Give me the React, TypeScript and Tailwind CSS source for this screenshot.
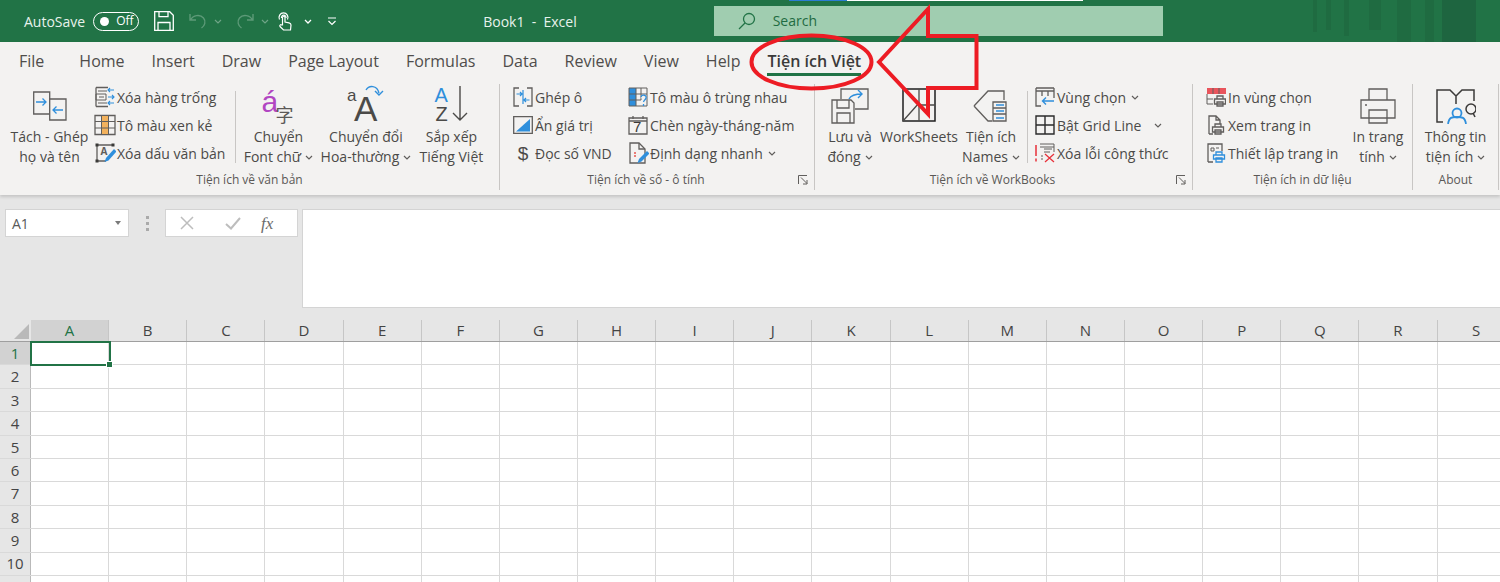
import type { ReactNode } from "react";

const columns = ["A", "B", "C", "D", "E", "F", "G", "H", "I", "J", "K", "L", "M", "N", "O", "P", "Q", "R", "S"];
const rows = [1, 2, 3, 4, 5, 6, 7, 8, 9, 10, 11];
const tabs = ["Home", "Insert", "Draw", "Page Layout", "Formulas", "Data", "Review", "View", "Help"];

const G = "#605e5c";
const B = "#2f8fdc";

function Chevron({ className = "" }: { className?: string }) {
  return (
    <svg viewBox="0 0 8 5" className={`inline-block w-2 h-[5px] ${className}`} fill="none" stroke="#605e5c" strokeWidth="1.2">
      <path d="M1 1l3 3 3-3" />
    </svg>
  );
}

function Icon({ size, w, h, children }: { size?: number; w?: number; h?: number; children: ReactNode }) {
  const width = w ?? size ?? 22;
  const height = h ?? size ?? 22;
  return (
    <svg width={width} height={height} viewBox={`0 0 ${width} ${height}`} fill="none" strokeWidth="1.3" className="shrink-0">
      {children}
    </svg>
  );
}

function SmallRow({ icon, label, chevron, gap }: { icon: ReactNode; label: string; chevron?: boolean; gap?: string }) {
  return (
    <div className="flex items-center h-[28px] whitespace-nowrap">
      <div className="w-[24px] flex justify-center">{icon}</div>
      <span>{label}</span>
      {chevron && <Chevron className={gap ?? "ml-[5px]"} />}
    </div>
  );
}

function LargeButton({ width, icon, line1, line2, chevron }: { width: string; icon: ReactNode; line1: string; line2: string; chevron?: boolean }) {
  return (
    <div className={`${width} shrink-0 flex flex-col items-center`}>
      <div className="h-[40px] mt-[2px] flex items-center justify-center">{icon}</div>
      <div className="h-[20px] mt-[1px] leading-[20px] whitespace-nowrap">{line1}</div>
      <div className="h-[20px] leading-[20px] whitespace-nowrap flex items-center">
        {line2}
        {chevron && <Chevron className="ml-[4px]" />}
      </div>
    </div>
  );
}

function Group({ width, label, launcher, children }: { width: string; label: string; launcher?: boolean; children: ReactNode }) {
  return (
    <div className={`${width} shrink-0 flex flex-col border-r border-[#c8c6c4]`}>
      <div className="h-[85px] flex">{children}</div>
      <div className="h-[21px] flex items-center text-[12px] text-[#5a5856]">
        <div className="flex-1 text-center">{label}</div>
        {launcher ? (
          <svg width="22" height="12" viewBox="0 0 22 12" fill="none" stroke="#605e5c">
            <path d="M6.5 10V1.5H15M9 3.5l6 6M15 6v4h-4" />
          </svg>
        ) : null}
      </div>
    </div>
  );
}

function MiniSep({ className }: { className: string }) {
  return <div className={`w-px h-[72px] mt-[7px] bg-[#c8c6c4] shrink-0 ${className}`} />;
}

export default function App() {
  return (
    <div className="relative w-[1500px] h-[582px] overflow-hidden bg-white text-[14px] text-[#4b4a48] font-['Open_Sans','Noto_Sans',sans-serif]">
      {/* title bar */}
      <div className="relative h-[42px] bg-[#217346] flex items-center text-white">
        <span className="ml-[24px] text-[14px] text-[#e8f2ec]">AutoSave</span>
        <div className="ml-[8px] w-[46px] h-[19px] border border-white rounded-full flex items-center">
          <span className="ml-[6px] w-[9px] h-[9px] rounded-full bg-white" />
          <span className="ml-[7px] text-[12px] leading-none">Off</span>
        </div>
        <svg className="ml-[15px]" width="20" height="20" viewBox="0 0 20 20" fill="none" stroke="#fff" strokeWidth="1.3">
          <path d="M.7.7h15l3.6 3.6v15H.7zM5 .7v5h9v-5M4 19v-7.5h12V19" />
        </svg>
        <svg className="ml-[15px]" width="18" height="18" viewBox="0 0 18 18" fill="none" stroke="#5d9a78" strokeWidth="1.4">
          <path d="M1 2v6h6M1.5 8C4 3 11 2 14.500 6c3 3.500 1 8-2 10" />
        </svg>
        <div className="ml-[7px] opacity-50">
          <svg width="8" height="5" viewBox="0 0 8 5" fill="none" stroke="#bcd6c7" strokeWidth="1.2"><path d="M1 1l3 3 3-3" /></svg>
        </div>
        <svg className="ml-[14px]" width="18" height="18" viewBox="0 0 18 18" fill="none" stroke="#5d9a78" strokeWidth="1.4">
          <path d="M17 2v6h-6M16.500 8C14 3 7 2 3.500 6c-3 3.500-1 8 2 10" />
        </svg>
        <div className="ml-[7px] opacity-50">
          <svg width="8" height="5" viewBox="0 0 8 5" fill="none" stroke="#bcd6c7" strokeWidth="1.2"><path d="M1 1l3 3 3-3" /></svg>
        </div>
        <svg className="ml-[8px]" width="16" height="20" viewBox="0 0 16 20" fill="none" stroke="#fff" strokeWidth="1.2">
          <path d="M2.500 8.500a4.500 4.500 0 1 1 8 0M4.500 7a2.300 2.300 0 1 1 4.500 0" />
          <path d="M5.500 14V6.500a1.200 1.200 0 0 1 2.500 0V11l4 .8c1.500.4 2 1 2 2.200l-.5 5H6.500L3 15.500c-.8-1 .6-2.300 1.500-1.500z" fill="#217346" />
        </svg>
        <svg className="ml-[11px]" width="8" height="5" viewBox="0 0 8 5" fill="none" stroke="#fff" strokeWidth="1.3"><path d="M1 1l3 3 3-3" /></svg>
        <svg className="ml-[15px]" width="10" height="9" viewBox="0 0 10 9" fill="none" stroke="#fff" strokeWidth="1.2"><path d="M1 1h8M1.500 4l3.500 3.500L8.500 4" /></svg>
        <span className="ml-[146px] text-[14px] whitespace-pre text-[#e8f2ec]">Book1  -  Excel</span>
        <div className="ml-[137px] w-[449px] h-[30px] mt-[-1px] bg-[#a0cdb0] flex items-center">
          <svg className="ml-[24px]" width="18" height="18" viewBox="0 0 18 18" fill="none" stroke="#217346" strokeWidth="1.3">
            <circle cx="11" cy="7" r="5.500" />
            <path d="M7 11l-6 6" />
          </svg>
          <span className="ml-[17px] text-[14px] text-[#1f6b42]">Search</span>
        </div>
        {/* top edge of window behind and the background pattern */}
        <div className="absolute top-0 left-[789px] w-[58px] h-px bg-[#2b7cd3]" />
        <div className="absolute top-0 left-[847px] w-[236px] h-px bg-white" />
        <div className="absolute top-0 right-0 h-[42px] w-[187px] flex">
          <div className="w-[4px] h-[32px] ml-0 bg-[#1f6b41]" />
          <div className="w-[5px] h-[30px] ml-[9px] bg-[#1f6b41]" />
          <div className="w-[5px] h-[36px] ml-[13px] bg-[#1f6b41]" />
          <div className="w-[12px] h-[30px] ml-[20px] bg-[#1f6b41]" />
          <div className="w-[14px] h-[42px] ml-[16px] bg-[#1f6b41]" />
          <div className="w-[9px] h-[42px] ml-[14px] bg-[#1f6b41]" />
          <div className="w-[34px] h-[42px] ml-[8px] bg-[#1e6540]" />
        </div>
      </div>

      {/* ribbon */}
      <div className="h-[153px] bg-[#f3f2f1] shadow-[0_2px_3px_rgba(0,0,0,0.15)] relative">
        <div className="h-[42px] flex items-start pt-[8px] text-[16px] text-[#4f4d4b] leading-[22px]">
          <span className="ml-[19px]">File</span>
          <div className="ml-[35px] flex gap-[27px]">
            {tabs.map((tab) => (
              <span key={tab}>{tab}</span>
            ))}
            <div className="relative font-semibold text-[#3b3a39]">
              Tiện ích Việt
              <div className="absolute left-0 right-0 top-[23px] h-[3px] bg-[#217346]" />
            </div>
          </div>
        </div>

        <div className="flex">
          <Group width="w-[500px]" label="Tiện ích về văn bản">
            <LargeButton
              width="w-[79px] ml-[10px]"
              line1="Tách - Ghép"
              line2="họ và tên"
              icon={
                <Icon w={34} h={30}>
                  <path d="M.7 1h16v22H.7z" stroke={G} />
                  <path d="M16.700 8H33v21H16.700z" stroke={G} fill="#f3f2f1" />
                  <path d="M3 11h10M9.500 7.500L13 11l-3.500 3.500M30 19H20M23.500 15.500L20 19l3.500 3.500" stroke={B} />
                </Icon>
              }
            />
            <div className="ml-[4px] flex flex-col -mt-[1px]">
              <SmallRow
                label="Xóa hàng trống"
                icon={
                  <Icon size={22}>
                    <path d="M2 1.500h12M2 20.500h12M2 1.500v19" stroke={G} />
                    <path d="M2 8h10v6H2zM5 11h5M4 5h9M4 17h9" stroke={G} strokeWidth="1" />
                    <path d="M20 4h-6M16 2l-2 2 2 2M14 11h6M18 9l2 2-2 2M20 17h-6M16 15l-2 2 2 2" stroke={B} strokeWidth="1.1" />
                  </Icon>
                }
              />
              <SmallRow
                label="Tô màu xen kẻ"
                icon={
                  <Icon size={22}>
                    <path d="M1 1.500h20v19H1z" stroke={G} />
                    <path d="M8 2h7v18H8z" fill="#f3b25d" />
                    <path d="M1 7.500h20M1 14h20M7.500 2v18M14.500 2v18" stroke={G} strokeWidth="1" />
                  </Icon>
                }
              />
              <SmallRow
                label="Xóa dấu văn bản"
                icon={
                  <Icon size={22}>
                    <path d="M3 3h16M3 3v16M3 19h9" stroke={G} />
                    <path d="M1.500 1.500h3v3h-3zM17.500 1.500h3v3h-3zM1.500 17.500h3v3h-3z" fill="#3b3a39" />
                    <text x="6.500" y="13" fontSize="10" fontWeight="700" fill={G} fontFamily="Open Sans">A</text>
                    <path d="M20 7l-8 9-1.500 4 4-1.500 8-9z" fill={B} />
                  </Icon>
                }
              />
            </div>
            <MiniSep className="ml-[10px]" />
            <LargeButton
              width="w-[70px] ml-[7px]"
              line1="Chuyển"
              line2="Font chữ"
              chevron
              icon={
                <div className="relative w-[34px] h-[36px] font-['Liberation_Sans','Noto_Sans_CJK_SC',sans-serif]">
                  <span className="absolute left-0 top-[-3px] text-[30px] leading-[34px] text-[#b146c2]">á</span>
                  <span className="absolute left-[14px] top-[16px] text-[18px] leading-[20px] text-[#5b5957] font-['Noto_Sans_CJK_SC',sans-serif]">字</span>
                </div>
              }
            />
            <LargeButton
              width="w-[91px] ml-[7px]"
              line1="Chuyển đổi"
              line2="Hoa-thường"
              chevron
              icon={
                <div className="relative w-[38px] h-[38px] font-['Liberation_Sans',sans-serif] text-[#4b4a48]">
                  <span className="absolute left-0 top-[0px] text-[17px] leading-[18px]">a</span>
                  <span className="absolute left-[7px] top-[4px] text-[35px] leading-[36px]">A</span>
                  <svg className="absolute left-[18px] top-[-2px]" width="20" height="18" viewBox="0 0 20 18" fill="none" stroke={B} strokeWidth="1.4">
                    <path d="M1 5c3-5 11-5 13 3M10 6l4 4 4-4" />
                  </svg>
                </div>
              }
            />
            <LargeButton
              width="w-[66px] ml-[7px]"
              line1="Sắp xếp"
              line2="Tiếng Việt"
              icon={
                <div className="relative w-[34px] h-[38px] font-['Liberation_Sans',sans-serif]">
                  <span className="absolute left-0 top-[-2px] text-[20px] leading-[20px] text-[#2f8fdc]">A</span>
                  <span className="absolute left-[1px] top-[17px] text-[20px] leading-[20px] text-[#4b4a48]">Z</span>
                  <svg className="absolute left-[18px] top-[-1px]" width="16" height="36" viewBox="0 0 16 36" fill="none" stroke="#4b4a48" strokeWidth="1.4">
                    <path d="M8 0v34M1 27l7 7 7-7" />
                  </svg>
                </div>
              }
            />
          </Group>

          <Group width="w-[315px]" label="Tiện ích về số - ô tính" launcher>
            <div className="ml-[11px] flex flex-col -mt-[1px] w-[115px]">
              <SmallRow
                label="Ghép ô"
                icon={
                  <Icon size={20}>
                    <path d="M6 1H1v18h5M14 1h5v18h-5" stroke={G} />
                    <path d="M3.500 7H9M7 5l2 2-2 2M16.500 13H11M13 11l-2 2 2 2M10 3v14" stroke={B} strokeWidth="1.200" />
                  </Icon>
                }
              />
              <SmallRow
                label="Ẩn giá trị"
                icon={
                  <Icon w={20} h={18}>
                    <path d="M.7.700h18.600v16.600H.7z" stroke={G} />
                    <path d="M3 15.500L17 3v12.500z" fill={B} />
                  </Icon>
                }
              />
              <SmallRow
                label="Đọc số VND"
                icon={<span className="text-[19px] leading-none text-[#4b4a48] font-['Liberation_Sans',sans-serif]">$</span>}
              />
            </div>
            <div className="flex flex-col -mt-[1px]">
              <SmallRow
                label="Tô màu ô trùng nhau"
                icon={
                  <Icon size={20}>
                    <path d="M1 1h7v18H1z" fill={B} />
                    <path d="M1 1h18v18H1zM1 7h18M1 13h12M8 1v18M13 1v12" stroke={G} strokeWidth="1" />
                    <path d="M13 10c1-3 6-2 5 1-.5 2-2 2-2.500 4M15.500 17v2" stroke={B} strokeWidth="1.300" fill="#f3f2f1" />
                  </Icon>
                }
              />
              <SmallRow
                label="Chèn ngày-tháng-năm"
                icon={
                  <div className="relative">
                    <Icon size={20}>
                      <path d="M1 3h18v16H1zM1 6h18M5 1v3M15 1v3" stroke={G} />
                    </Icon>
                    <span className="absolute left-[5px] top-[3px] text-[15px] leading-[18px] text-[#3b3a39] font-['Liberation_Sans',sans-serif]">7</span>
                  </div>
                }
              />
              <SmallRow
                label="Định dạng nhanh"
                chevron
                icon={
                  <Icon size={22}>
                    <path d="M3 1h9l6 6v14H3z" stroke={G} />
                    <path d="M12 1v6h6" stroke={G} />
                    <path d="M7 11h2M7 14h2" stroke="#e8554e" strokeWidth="1.500" />
                    <path d="M20 9l-8 8-1.500 4 4-1.500 8-8z" fill={B} />
                  </Icon>
                }
              />
            </div>
          </Group>

          <Group width="w-[378px]" label="Tiện ích về WorkBooks" launcher>
            <LargeButton
              width="w-[52px] ml-[9px]"
              line1="Lưu và"
              line2="đóng"
              chevron
              icon={
                <Icon w={38} h={38}>
                  <path d="M10 12V2h27v20H24" stroke={G} />
                  <path d="M18 12c2-4 6-5 13-5M27 3l4 4-4 4" stroke={B} strokeWidth="1.400" />
                  <path d="M1 13h19l3 3v20H1zM6 13v8h12v-8M6 36v-10h13v10" stroke={G} fill="#f3f2f1" />
                </Icon>
              }
            />
            <LargeButton
              width="w-[76px] ml-[5px]"
              line1="WorkSheets"
              line2=""
              icon={
                <Icon w={34} h={36}>
                  <path d="M1 1h32v32H1z" stroke="#1f1f1f" strokeWidth="1.500" />
                  <path d="M1 33L17 15M17 1v32M17 17h16" stroke="#4b4a48" />
                </Icon>
              }
            />
            <LargeButton
              width="w-[52px] ml-[8px]"
              line1="Tiện ích"
              line2="Names"
              chevron
              icon={
                <Icon w={36} h={36}>
                  <path d="M1 18L15 3h16v9M19 33h-4L1 18" stroke={G} />
                  <path d="M20 14h13v19H20zM20 20h13M20 26h13" stroke={G} />
                  <path d="M23 17h8M23 23h8M23 30h8" stroke={B} strokeWidth="1.500" />
                </Icon>
              }
            />
            <MiniSep className="ml-[10px]" />
            <div className="ml-[5px] flex flex-col -mt-[1px]">
              <SmallRow
                label="Vùng chọn"
                chevron
                icon={
                  <Icon size={20}>
                    <path d="M1 1h18M1 4h18M1 1v18h5M19 1v10M7 4v5M13 4v5" stroke={G} />
                    <path d="M19 14H8M11 10.500L7.500 14l3.500 3.500" stroke={B} strokeWidth="1.400" />
                  </Icon>
                }
              />
              <SmallRow
                label="Bật Grid Line"
                chevron
                gap="ml-[13px]"
                icon={
                  <Icon size={20}>
                    <path d="M1 1h18v18H1zM10 1v18M1 10h18" stroke="#2b2b2b" strokeWidth="1.400" />
                  </Icon>
                }
              />
              <SmallRow
                label="Xóa lỗi công thức"
                icon={
                  <Icon size={20}>
                    <path d="M5 1h14M5 4h14M19 1v8M9 6h8M9 9h6M6 13h2M6 16h2" stroke={G} strokeWidth="1" />
                    <path d="M1 2v11M1 15.500v3" stroke="#e8303a" strokeWidth="1.500" />
                    <path d="M10 11l9 8M19 11l-9 8" stroke="#e8303a" strokeWidth="1.300" />
                  </Icon>
                }
              />
            </div>
          </Group>

          <Group width="w-[220px]" label="Tiện ích in dữ liệu">
            <div className="ml-[11px] flex flex-col -mt-[1px] w-[145px]">
              <SmallRow
                label="In vùng chọn"
                icon={
                  <Icon size={20}>
                    <path d="M1 1h19v6H1z" fill="#e9555c" />
                    <path d="M7 1v6M13 1v6M1 7v10h6M1 12h6" stroke={G} strokeWidth="1" />
                    <path d="M11 9h6v3h-6zM8.500 12h11v5h-11zM11 15h6v4h-6z" stroke={G} fill="#f3f2f1" />
                  </Icon>
                }
              />
              <SmallRow
                label="Xem trang in"
                icon={
                  <Icon size={20}>
                    <path d="M3 19V1h7l4 4v4M10 1v4h4M3 19h4" stroke={G} />
                    <path d="M9 9h6v3H9zM6.500 12h11v5h-11zM9 15h6v4H9z" stroke={G} fill="#f3f2f1" />
                  </Icon>
                }
              />
              <SmallRow
                label="Thiết lập trang in"
                icon={
                  <Icon size={20}>
                    <path d="M2 19V1h14v7M2 19h5" stroke={G} />
                    <path d="M5 5h3v3H5zM10 5h3" stroke={G} strokeWidth="1" />
                    <path d="M10 9h6v3h-6zM7.500 12h11v4h-11zM10 15h6v4h-6z" stroke={B} fill="#f3f2f1" />
                  </Icon>
                }
              />
            </div>
            <LargeButton
              width="w-[58px]"
              line1="In trang"
              line2="tính"
              chevron
              icon={
                <Icon w={36} h={36}>
                  <path d="M9 12V1h18v11M1 12h34v18H1zM9 22h18v13H9z" stroke={G} fill="#f3f2f1" />
                  <circle cx="6" cy="17" r="1" fill={G} />
                </Icon>
              }
            />
          </Group>

          <Group width="w-[86px]" label="About">
            <LargeButton
              width="w-[85px]"
              line1="Thông tin"
              line2="tiện ích"
              chevron
              icon={
                <Icon w={40} h={36}>
                  <path d="M7 34H1V2h13l6 6v8M20 8l6-6h12v11" stroke="#3b3a39" strokeWidth="1.500" />
                  <circle cx="35" cy="21" r="5" stroke="#3b3a39" strokeWidth="1.500" />
                  <path d="M39 29l-2-4" stroke="#3b3a39" strokeWidth="1.500" />
                  <circle cx="21" cy="25" r="4.500" stroke={B} strokeWidth="1.800" />
                  <path d="M12 36c1-7 4-7 9-7s8 0 9 7" stroke={B} strokeWidth="1.800" />
                </Icon>
              }
            />
          </Group>
        </div>
      </div>

      {/* formula bar */}
      <div className="h-[125px] bg-[#e6e6e6] flex items-start pt-[14px]">
        <div className="ml-[5px] w-[124px] h-[28px] bg-white border border-[#d4d4d4] flex items-center justify-between px-[6px] text-[#595959]">
          <span>A1</span>
          <span className="w-0 h-0 mr-[1px] border-x-[3.5px] border-x-transparent border-t-[4px] border-t-[#7a7a7a]" />
        </div>
        <div className="ml-[17px] mt-[7px] flex flex-col gap-[3px]">
          <span className="w-[3px] h-[3px] bg-[#aaa]" />
          <span className="w-[3px] h-[3px] bg-[#aaa]" />
          <span className="w-[3px] h-[3px] bg-[#aaa]" />
        </div>
        <div className="ml-[16px] w-[133px] h-[28px] bg-white border border-[#d4d4d4] flex items-center">
          <svg className="ml-[14px]" width="14" height="14" viewBox="0 0 14 14" fill="none" stroke="#bdbdbd" strokeWidth="1.500"><path d="M1 1l12 12M13 1L1 13" /></svg>
          <svg className="ml-[31px]" width="16" height="13" viewBox="0 0 16 13" fill="none" stroke="#bdbdbd" strokeWidth="2"><path d="M1 7l5 4.500L15 1" /></svg>
          <span className="ml-[20px] text-[17px] italic leading-none text-[#6b6b6b] font-['Liberation_Serif',serif]">fx</span>
        </div>
        <div className="ml-[4px] flex-1 h-[99px] bg-white border border-[#d4d4d4] border-r-0" />
      </div>

      {/* sheet */}
      <div className="relative">
        <div className="flex h-[22px] bg-[#e6e6e6] border-b border-[#9f9f9f]">
          <div className="w-[31px] shrink-0 flex items-end justify-end pr-[2px] pb-[2px]">
            <span className="w-0 h-0 border-l-[15px] border-l-transparent border-b-[15px] border-b-[#b9b9b9]" />
          </div>
          {columns.map((col, i) => (
            <div
              key={col}
              className={`w-[78.150px] shrink-0 flex items-center justify-center text-[15px] border-r border-[#c6c6c6] ${
                i === 0 ? "bg-[#d2d2d2] text-[#217346]" : "text-[#444]"
              }`}
            >
              {col}
            </div>
          ))}
        </div>
        {rows.map((row, r) => (
          <div key={row} className="flex h-[23.400px] border-b border-[#d9d9d9]">
            <div
              className={`w-[31px] shrink-0 flex items-center justify-center text-[15px] border-r border-[#b9b9b9] ${
                r === 0 ? "bg-[#d2d2d2] text-[#217346]" : "bg-[#e6e6e6] text-[#444]"
              }`}
            >
              {row}
            </div>
            {columns.map((col) => (
              <div key={col} className="w-[78.150px] shrink-0 border-r border-[#d9d9d9]" />
            ))}
          </div>
        ))}
        {/* selected cell */}
        <div className="absolute left-[30px] top-[21px] w-[81px] h-[25px] border-2 border-[#217346]">
          <span className="absolute right-[-4px] bottom-[-4px] w-[5px] h-[5px] bg-[#217346] border border-white box-content" />
        </div>
      </div>

      {/* red annotation */}
      <svg className="absolute left-0 top-0 pointer-events-none" width="1500" height="582" fill="none" stroke="#ed1c24" strokeWidth="4">
        <ellipse cx="811.500" cy="62" rx="60" ry="26.500" />
        <path d="M879 62L928 9V36H976.500V88H928V114Z" strokeLinejoin="miter" />
      </svg>
    </div>
  );
}
